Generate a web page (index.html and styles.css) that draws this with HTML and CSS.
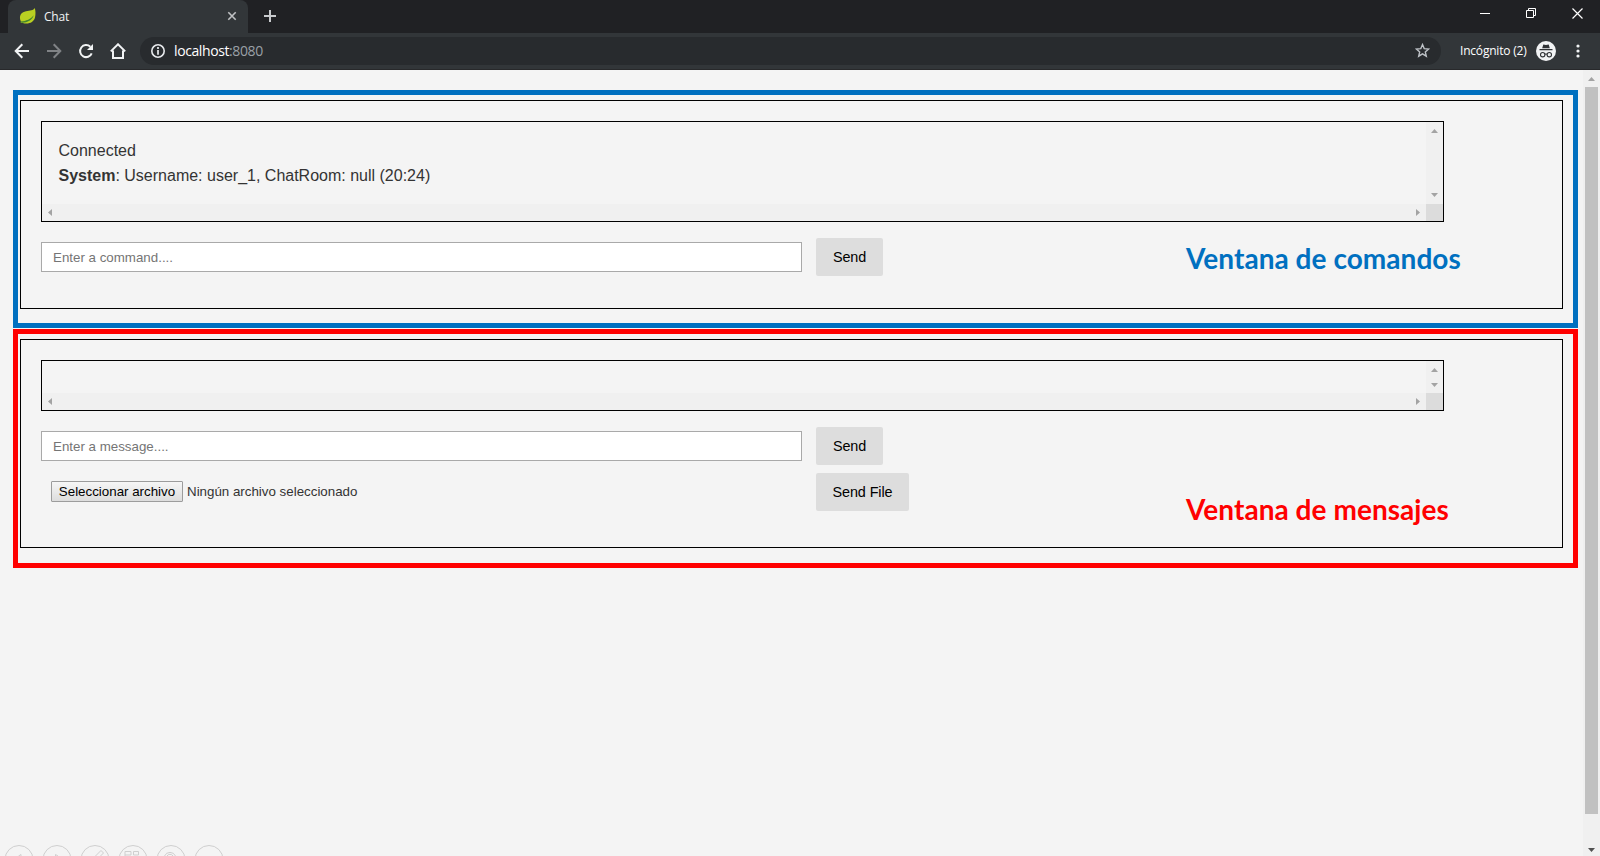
FILE: index.html
```html
<!DOCTYPE html>
<html lang="es">
<head>
<meta charset="utf-8">
<title>Chat</title>
<link rel="stylesheet" href="styles.css">
</head>
<body>
<header class="tabstrip">
  <div class="tab">
    <svg class="leaf" width="18" height="18" viewBox="0 0 18 18"><path d="M15.800 1C14.500 3.600 11 3.500 7 4.200C2.500 5 .8 8 1 11.200C1.200 14.500 3.500 16.500 7 16.500C11.500 16.600 15 14.500 16 10.500C16.800 7 16.600 4 15.800 1Z" fill="#b9cf22"/><path d="M2 14.500C7 14.200 12 12 14.700 8.300C13.300 13 8.500 15.700 3.200 15.700Z" fill="#43862e"/><circle cx="2.500" cy="14.900" r="1" fill="#6c9e2c"/></svg>
    <span class="tab-title">Chat</span>
    <svg class="tab-close" width="10" height="10" viewBox="0 0 10 10"><path d="M1.300 1.300L8.700 8.700M8.700 1.300L1.300 8.700" stroke="#bfc1c3" stroke-width="1.600"/></svg>
  </div>
  <svg class="new-tab" width="12" height="12" viewBox="0 0 12 12"><path d="M6 0V12M0 6H12" stroke="#c9cbce" stroke-width="2"/></svg>
  <div class="window-controls">
    <svg width="10" height="10" viewBox="0 0 10 10"><path d="M0 5.500H10" stroke="#fff"/></svg>
    <svg width="10" height="10" viewBox="0 0 10 10" fill="none" stroke="#fff"><path d="M.5 2.500H7.500V9.500H.5ZM2.500 2.500V.5H9.500V7.500H7.500"/></svg>
    <svg width="11" height="11" viewBox="0 0 11 11"><path d="M.5 .5L10.500 10.500M10.500 .5L.5 10.500" stroke="#fff" stroke-width="1.200"/></svg>
  </div>
</header>
<nav class="toolbar">
  <svg class="nav-icon" width="16" height="16" viewBox="0 0 16 16" fill="none" stroke="#f1f3f4" stroke-width="2"><path d="M15 8H2M8.300 1.300L1.700 8L8.300 14.700"/></svg>
  <svg class="nav-icon" width="16" height="16" viewBox="0 0 16 16" fill="none" stroke="#808386" stroke-width="2"><path d="M1 8H14M7.700 1.300L14.300 8L7.700 14.700"/></svg>
  <svg class="nav-icon" width="16" height="16" viewBox="0 0 16 16"><path d="M13.700 10.300A6 6 0 1 1 12.300 3.800" fill="none" stroke="#f1f3f4" stroke-width="2"/><path d="M15 1V7H9Z" fill="#f1f3f4"/></svg>
  <svg class="nav-icon" width="16" height="16" viewBox="0 0 16 16" fill="none" stroke="#f1f3f4" stroke-width="2"><path d="M.8 8.400L8 1.300L15.200 8.400M3 7.500V15H13V7.500"/></svg>
  <div class="address">
    <svg width="14" height="14" viewBox="0 0 14 14"><circle cx="7" cy="7" r="6.200" fill="none" stroke="#e8eaed" stroke-width="1.600"/><path d="M7 6V10.800M7 3.100V4.900" stroke="#e8eaed" stroke-width="1.700"/></svg>
    <span class="url">localhost<span class="port">:8080</span></span>
    <svg class="star" width="15" height="15" viewBox="0 0 15 15"><path d="M7.500 1.600L9.200 5.600L13.600 6L10.300 8.900L11.300 13.200L7.500 10.900L3.700 13.200L4.700 8.900L1.400 6L5.800 5.600Z" fill="none" stroke="#bdc1c6" stroke-width="1.400"/></svg>
  </div>
  <span class="incognito">Incógnito (2)</span>
  <svg class="avatar" width="20" height="20" viewBox="0 0 20 20"><circle cx="10" cy="10" r="10" fill="#f1f3f4"/><path d="M6.200 7.300L7.300 3.600L10 4.100L12.700 3.600L13.800 7.300ZM3.500 8H16.500V9.200H3.500Z" fill="#303336"/><g fill="none" stroke="#303336" stroke-width="1.100"><circle cx="6.700" cy="13.700" r="2.200"/><circle cx="13.300" cy="13.700" r="2.200"/><path d="M8.900 13.300Q10 12.600 11.100 13.300"/></g></svg>
  <svg class="menu-dots" width="4" height="14" viewBox="0 0 4 14" fill="#f1f3f4"><circle cx="2" cy="2" r="1.600"/><circle cx="2" cy="7" r="1.600"/><circle cx="2" cy="12" r="1.600"/></svg>
</nav>
<div class="viewport">
  <main class="page">
    <section class="frame frame-blue">
      <div class="panel">
        <div class="log log-commands">
          <div class="log-text"><p>Connected</p><p><b>System</b>: Username: user_1, ChatRoom: null (20:24)</p></div>
          <div class="vbar"><i class="arrow up"></i><i class="arrow down"></i></div>
          <div class="hbar"><i class="arrow left"></i><i class="arrow right"></i></div>
          <div class="corner"></div>
        </div>
        <div class="row">
          <input class="field" type="text" placeholder="Enter a command....">
          <button class="send">Send</button>
          <h2 class="caption">Ventana de comandos</h2>
        </div>
      </div>
    </section>
    <section class="frame frame-red">
      <div class="panel">
        <div class="log log-messages">
          <div class="log-text"></div>
          <div class="vbar"><i class="arrow up"></i><i class="arrow down"></i></div>
          <div class="hbar"><i class="arrow left"></i><i class="arrow right"></i></div>
          <div class="corner"></div>
        </div>
        <div class="row">
          <input class="field" type="text" placeholder="Enter a message....">
          <button class="send">Send</button>
        </div>
        <div class="row row-file">
          <div class="file"><button class="file-button">Seleccionar archivo</button><span class="file-name">Ningún archivo seleccionado</span></div>
          <button class="send send-file">Send File</button>
          <h2 class="caption caption-red">Ventana de mensajes</h2>
        </div>
      </div>
    </section>
    <svg class="slide-tools" width="230" height="12" viewBox="0 0 230 12" fill="none" stroke="#cfcfcf"><circle cx="19" cy="15.500" r="14"/><circle cx="57" cy="15.500" r="14"/><circle cx="95" cy="15.500" r="14"/><circle cx="133" cy="15.500" r="14"/><circle cx="171" cy="15.500" r="14"/><circle cx="209" cy="15.500" r="14"/><path d="M18.500 12L21 10.500V12M55.500 12V10.500L58 12M95.500 12L101 6.500L103.500 9L100.500 12M125 12V7.500H131V11H125M133.500 11V7.500H138.500V11H133.500M164.500 12A6 6 0 0 1 175.500 12M167 12A3.500 3.500 0 0 1 173 12"/></svg>
  </main>
  <aside class="scrollbar"><i class="arrow up"></i><div class="thumb"></div><i class="arrow down dark"></i></aside>
</div>
</body>
</html>
```
FILE: styles.css
```css
* { box-sizing: border-box; }
body { margin: 0; height: 856px; overflow: hidden; display: flex; flex-direction: column; background: #f4f4f4; color: #333; font-family: "Liberation Sans", Arial, sans-serif; }
svg { display: block; flex: none; }

/* Browser chrome */
.tabstrip { height: 33px; flex: none; display: flex; background: #202124; padding-left: 8px; }
.tab { width: 240px; height: 33px; display: flex; align-items: center; padding: 0 11px 1px 11px; border-radius: 8px 8px 0 0; background: #323639; }
.tab-title { margin-left: 7px; font: 12px "Open Sans", "Noto Sans", sans-serif; color: #f1f3f4; letter-spacing: -.2px; }
.tab-close { margin-left: auto; }
.new-tab { margin: 10px 0 0 16px; }
.window-controls { margin-left: auto; display: flex; gap: 36px; padding: 8px 17px 0 0; }
.toolbar { height: 37px; flex: none; display: flex; align-items: center; padding: 0 20px 1px 14px; background: #323639; border-bottom: 1px solid #28292b; }
.nav-icon { margin-right: 16px; }
.address { flex: 1; height: 28px; display: flex; align-items: center; margin-left: -2px; padding: 0 11px 0 11px; border-radius: 14px; background: #282b2e; }
.url { margin-left: 9px; font: 14px "Open Sans", "Noto Sans", sans-serif; color: #fff; letter-spacing: -.4px; }
.port { color: #9aa0a6; }
.star { margin-left: auto; }
.incognito { margin-left: 19px; width: 67px; white-space: nowrap; font: 12px "Open Sans", "Noto Sans", sans-serif; letter-spacing: -.2px; color: #fff; }
.avatar { margin-left: 9px; }
.menu-dots { margin-left: 20px; }

/* Chat page */
.viewport { flex: 1; display: flex; min-height: 0; }
.page { flex: 1; min-width: 0; display: flex; flex-direction: column; gap: 1px; padding: 20px 5px 0 13px; }
.frame { border: 5px solid #0070c0; padding: 5px 10px 14px 2px; }
.frame-red { border-color: #f00; padding-bottom: 15px; }
.panel { height: 209px; border: 1px solid #000; padding: 20px; }
.log { width: 1403px; border: 1px solid #000; display: grid; grid-template: 1fr 17px / 1fr 17px; }
.log-commands { height: 101px; }
.log-messages { height: 51px; }
.log-text { padding: 16px 16px 0 16.5px; font-size: 16px; line-height: 25px; min-height: 0; overflow: hidden; }
.log-messages .log-text { padding: 0; }
.log p { margin: 0; }
.vbar, .hbar { background: #f0f0f0; display: flex; align-items: center; justify-content: space-between; }
.vbar { flex-direction: column; padding: 7px 0; }
.log-messages .vbar { padding-bottom: 6px; }
.hbar { padding: 0 6px; }
.corner { background: #dcdcdc; }
.arrow { width: 7px; height: 4px; background: #a3a3a3; flex: none; }
.up { clip-path: polygon(50% 0, 100% 100%, 0 100%); }
.down { clip-path: polygon(0 0, 100% 0, 50% 100%); }
.left, .right { width: 4px; height: 7px; }
.left { clip-path: polygon(0 50%, 100% 0, 100% 100%); }
.right { clip-path: polygon(0 0, 100% 50%, 0 100%); }
.row { display: flex; align-items: center; height: 38px; margin-top: 16px; }
.field { width: 761px; height: 30px; margin: 0; padding: 0 11px; border: 1px solid #a9a9a9; background: #fff; font: 13.333px "Liberation Sans", Arial, sans-serif; }
.field::placeholder { color: #757575; }
.send { width: 67px; height: 38px; margin: 0 0 0 14px; padding: 0; border: 0; border-radius: 2px; background: #ddd; color: #000; font: 14.4px "Liberation Sans", Arial, sans-serif; letter-spacing: -.1px; }
.send-file { width: 93px; }
.row-file { margin-top: 8px; }
.file { width: 761px; display: flex; align-items: center; padding: 0 0 2px 10px; font-size: 13.333px; }
.file-button { width: 132px; height: 21px; margin: 0; padding: 0; border: 1px solid #9c9c9c; border-radius: 1px; background: linear-gradient(#f6f6f6, #ddd); color: #000; font: 13.333px "Liberation Sans", Arial, sans-serif; white-space: nowrap; }
.file-name { margin-left: 4px; }
.caption { margin: 2px 0 0 303px; font: bold 28px/36px Lato, sans-serif; letter-spacing: .05px; color: #0070c0; white-space: nowrap; }
.caption-red { margin: 34px 0 0 277px; color: #f00; }
.slide-tools { margin: auto 0 0 -13px; }

.scrollbar { width: 17px; display: flex; flex-direction: column; align-items: center; background: #f0f0f0; padding: 7px 0 4px; }
.thumb { width: 13px; height: 727px; margin: 6px 0 auto; background: #c1c1c1; }
.dark { background: #505050; }
```
